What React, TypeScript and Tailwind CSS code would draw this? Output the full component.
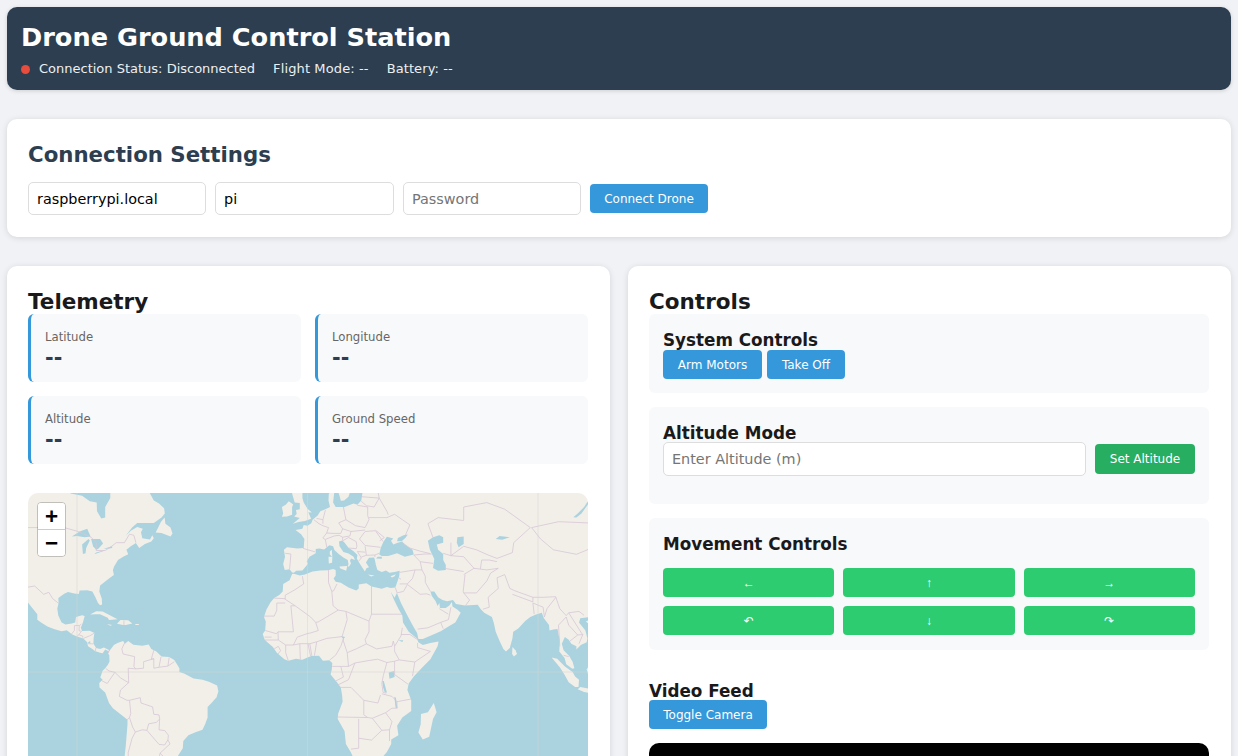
import React from 'react'

type Pt = [number, number]

// web mercator, same tile scale as the screenshot (tile = 230.5px, map box starts at 28,493)
const project = ([lon, lat]: Pt): Pt => {
  const x = 279.5 + (lon * 922) / 360
  const y = 179 - (922 / (2 * Math.PI)) * Math.log(Math.tan(Math.PI / 4 + (lat * Math.PI) / 360))
  return [x, y]
}
const toPath = (pts: Pt[], close = true) =>
  pts
    .map(project)
    .map(([x, y], i) => `${i ? 'L' : 'M'}${x.toFixed(1)} ${y.toFixed(1)}`)
    .join(' ') + (close ? 'Z' : '')

const land: Pt[][] = [
  // north + central america
  [[-130,66],[-130,40],[-112,30],[-109,26],[-105.5,22],[-105.5,20],[-104,19],[-101.5,17.5],[-99,16.6],[-96,15.7],[-94,16.1],[-92,14.6],[-90,13.7],[-87.5,13],[-86,11.5],[-85.7,10],[-84,9],[-83,8.2],[-81,7.5],[-80,7.3],[-79,8.8],[-77.5,8],[-77.5,8.6],[-79.5,9.5],[-81,8.9],[-82.5,9.3],[-83.6,11],[-83.5,13],[-83.2,15],[-85,15.9],[-88,15.8],[-88.5,17],[-87.7,19],[-87,21.4],[-88,21.6],[-90.4,21],[-90.7,19],[-92,18.6],[-94.5,18.2],[-96,19],[-97.3,21.5],[-97.7,24],[-97.2,26],[-97.3,27.7],[-95,29.2],[-93.5,29.8],[-91,29.3],[-89.3,29.1],[-89,30.3],[-86,30.4],[-84,30],[-82.8,28],[-81.8,26],[-81,25.2],[-80.2,25.5],[-80.3,27.5],[-81.3,30],[-81,32],[-79,33.3],[-77,34.6],[-75.6,35.4],[-76,37],[-75.5,38],[-74,40],[-72,41],[-70,41.7],[-70.7,43],[-69,44],[-67,44.9],[-65.7,43.5],[-63.5,44.6],[-61,45.3],[-60,46.2],[-60.6,47],[-61.5,45.9],[-64.5,46.2],[-65,47.8],[-64.3,48.7],[-66.5,49.2],[-69,48.2],[-71,46.9],[-68.5,49],[-66.5,50.2],[-60,50.2],[-57,51.5],[-55.7,52.5],[-56,53.7],[-58,54.8],[-60,55.5],[-61.5,57],[-62.5,58.5],[-64.5,60.3],[-64.5,66]],
  // newfoundland + caribbean
  [[-59.3,47.7],[-57,47.6],[-53.5,46.7],[-52.7,47.5],[-53.5,49],[-55.5,50],[-55.8,51.5],[-57.2,50.5],[-58.5,48.8]],
  [[-84.9,21.9],[-82.5,23.1],[-80,23],[-77,21.5],[-74.2,20.2],[-77.5,19.9],[-78,20.7],[-81,22],[-83,22]],
  [[-74.4,18.5],[-73,19.9],[-70,19.8],[-68.4,18.6],[-71,18.1],[-72,18.1]],
  [[-78.3,18.4],[-76.3,18.1],[-77,17.8]],
  [[-67.2,18.4],[-65.7,18.4],[-66,18],[-67.2,18]],
  // south america
  [[-77.5,8],[-75.6,10.5],[-74.2,11.2],[-72,12],[-71.3,11],[-70,12],[-68,10.6],[-64.5,10.2],[-62,10.7],[-61,9],[-59,8],[-57,6],[-54,5.8],[-52,4.7],[-50,1.5],[-50,0],[-48,-0.7],[-44.5,-2.5],[-41,-3],[-38.5,-3.8],[-35.3,-5.3],[-34.8,-7.5],[-35.5,-9.8],[-37.5,-12],[-39,-13.5],[-39,-17.5],[-40,-20],[-41,-22],[-44,-23],[-46.5,-24],[-48.5,-26],[-48.7,-28.5],[-50.5,-31],[-52.5,-33],[-54,-34.7],[-57,-34.6],[-58,-40],[-65,-41],[-75,-50],[-73.5,-37],[-71.5,-32],[-71,-28],[-70.3,-20],[-70.3,-18.3],[-72,-17],[-76,-14],[-77.5,-12],[-79,-8],[-81.2,-6],[-81.3,-4.3],[-80,-3],[-80.9,-2.2],[-80,0.5],[-79,1.5],[-78,2.7],[-77.3,4],[-77.4,6.5],[-77.9,7.2]],
  // eurasia + africa
  [[30,70],[30,60],[28,59.5],[24,59.3],[23.5,58.5],[24.5,58],[21.5,57.3],[21,55.5],[19.5,54.5],[18,54.8],[14.5,54],[11,54],[10,55],[10.5,57.5],[8.3,57],[8.2,55.5],[8.8,54],[7,53.5],[5,53],[4,52],[2,51],[1.5,50.1],[0,49.5],[-1.5,49.7],[-2,48.7],[-4.7,48.4],[-2.5,47.3],[-1.2,46],[-1.5,43.5],[-4,43.4],[-8,43.7],[-9.2,43],[-8.8,41],[-9.5,38.8],[-8.9,37],[-7,37.2],[-6,36.2],[-5.3,36.1],[-4.4,36.7],[-2,36.8],[-0.5,38.2],[0.2,39],[-0.3,39.6],[0.8,41],[3.2,42],[3.2,43.2],[4.7,43.4],[6.5,43.1],[8.5,44.3],[10,44],[10.5,42.9],[12.2,41.8],[14,40.8],[15.7,40],[16,38.8],[15.7,38],[16.2,38],[17,39],[16.6,39.8],[17,40.5],[18.5,40],[18,41],[16,41.9],[14,42.4],[12.5,44],[12.3,45.3],[13.6,45.6],[14.5,45],[16,43.6],[18,42.6],[19.5,41.5],[19.3,40.4],[20.5,38.8],[21.3,37.8],[22.4,36.5],[23,37.5],[24,37.8],[22.8,39.3],[24,40.7],[26,40.8],[26.3,40],[26.7,38.5],[27.3,37],[29,36.3],[30.6,36.8],[32,36.1],[34,36.3],[36,36.7],[35.8,35],[35,33],[34.3,31.3],[32.5,31.1],[31,31.5],[29,30.9],[25,31.6],[23,32.7],[20,32.3],[20,31],[19,30.3],[16,31.3],[13,32.9],[11,33.2],[10.2,34.3],[11,35.2],[11,37],[10,37.3],[8,36.9],[5,36.8],[2,36.5],[-1,35.5],[-3,35.2],[-5.3,35.8],[-6,35.7],[-7,33.7],[-9.5,32.5],[-9.7,30],[-11,28.8],[-13,27.7],[-14.5,26.2],[-16,23.7],[-17,21],[-16.3,19.3],[-16.5,16],[-17.5,14.7],[-16.7,12.5],[-15,11],[-13.5,9.7],[-12,7.5],[-9,5],[-7.5,4.4],[-4.5,5.2],[-2,4.8],[0,5.6],[1.5,6.2],[4.5,6.3],[6,4.4],[8.5,4.6],[9.7,3.5],[9.5,1],[9,-1],[11.5,-4],[13,-6],[13.5,-9],[13.7,-11.5],[12,-16],[11.8,-18],[14.5,-22.5],[15,-27],[17,-30],[18.3,-32.5],[18.5,-34.3],[20,-34.8],[25,-34],[28,-32.7],[31,-29.8],[32.7,-27],[32.7,-25.5],[35.5,-24],[35,-20.5],[37,-17.5],[40.5,-15],[40.5,-11],[39,-7],[39.5,-4.5],[41.5,-1.8],[44.5,1.5],[48,5],[50.8,10],[51.2,11.8],[48,11.2],[45,10.5],[43.3,11.5],[42.7,13],[39.5,15.5],[37.3,19],[37,21.5],[35.5,24],[33.8,27],[32.5,29.9],[34,27.8],[34.9,29.5],[36.5,26],[39,21.5],[41,18],[42.8,15],[43.3,12.8],[45,12.8],[48,14],[52,15.7],[55,17.5],[57.7,19],[59.8,22.5],[58.6,23.6],[56.6,24.8],[56.4,26.3],[55.5,25.2],[54,24.2],[51.7,24.2],[51.5,26],[50.8,24.9],[50.1,26.5],[48.5,28.5],[48,30],[49.5,30],[51,28],[52.7,27],[54.5,26.6],[56.8,27],[58,25.6],[61.5,25.1],[66.5,25.4],[67.5,24],[69,22.5],[72,21],[72.7,19],[73.5,15.5],[75,12],[76.5,9],[77.5,8],[79,9.3],[80,13],[80.3,15.5],[82.3,16.7],[85,19.5],[87,21],[89,21.8],[91.5,22.5],[92.3,20.5],[94.3,18],[94.5,16],[96,16.4],[97.6,16.5],[98.5,12],[98.3,8],[100.4,5.5],[101,3],[103.4,1.3],[104.2,1.5],[103.5,4],[102.2,6.2],[100,8.5],[99.3,11],[100.5,13.5],[102,12.5],[103,11],[105,10],[105,8.7],[106.7,10.5],[109,11.5],[109.3,13],[108.5,16],[106,19],[106.5,20.5],[110,21],[113,22],[120,30],[122,40],[130,43],[140,55],[150,70]],
  // scandinavia
  [[5,65],[5,59.5],[6,58.3],[8,58],[10.5,59.3],[11.3,58.5],[12.5,56.5],[13,55.4],[14.3,55.5],[16,56.3],[16.7,57.5],[18,59],[17.2,61],[17.5,65]],
  // islands
  [[-5.7,50],[-3.5,50.4],[-1,50.7],[1.4,51.2],[0.3,52.8],[1.7,52.7],[0,53.6],[-1.5,55],[-2,56],[-2,57.6],[-4,57.7],[-3,58.6],[-5,58.6],[-6,57],[-5,55],[-3,54.9],[-3,53.5],[-4.5,53.3],[-4.2,52.4],[-5.2,51.8],[-3,51.4]],
  [[-6,52.2],[-6,54],[-5.6,54.6],[-7.3,55.3],[-8.5,54.5],[-10,54],[-9.5,52.5],[-10,51.7],[-8,51.8]],
  [[9.7,41],[9.5,43],[8.7,42.5],[8.7,41.6]],
  [[8.3,39],[8.2,41],[9.7,41],[9.6,39.2]],
  [[12.5,38],[15.5,38.2],[15.1,36.7],[12.7,37.5]],
  [[23.6,35.5],[26.2,35.2],[24.8,34.9]],
  [[32.4,35],[34.5,35.6],[33.9,34.9],[33,34.6]],
  [[43.3,-23],[44.2,-20],[44.3,-16.2],[47,-15.5],[49.3,-12],[50.4,-15.5],[49,-18],[47.5,-24.5],[45,-25.5]],
  [[80,9.7],[81.2,8.5],[81.8,7],[80.6,6],[79.9,7]],
  [[95.3,5.6],[97.5,5.2],[100.5,2.2],[103.5,0],[104.5,-1.8],[106,-3],[105.8,-5.8],[104.5,-5.8],[102,-4],[100.3,-1],[98.6,1.8]],
  [[105.5,-6.7],[106.5,-5.9],[110,-6.5],[112,-7.5],[111,-8.4],[108,-7.8]],
  [[109,1],[109.6,2],[113,3],[113,-3.5],[110,-2.5]],
  [[108.7,19.3],[110.5,20.1],[110,18.4]],
]

const water: Pt[][] = [
  // hudson + james bay
  [[-94,63],[-94.5,59],[-92.5,57],[-88,56.5],[-85,55.3],[-82.3,55],[-82.2,53],[-80.5,51.3],[-79,51.5],[-79,54],[-77,56],[-77,58],[-78,60],[-78,63]],
  // great lakes
  [[-92,46.7],[-89,48],[-86,48.7],[-84.7,46.7],[-87,46.5],[-90,46.8]],
  [[-87.7,41.8],[-88,44.5],[-85.5,46],[-85,45.6],[-86.4,43.5],[-86.7,42]],
  [[-84.5,46],[-81,46],[-79.8,44.8],[-81.7,43.3],[-82.5,43],[-83.7,44]],
  [[-83.3,41.7],[-79,42.8],[-80,42.7],[-82.5,42.2]],
  [[-79.6,43.3],[-76.3,44],[-76.3,43.5],[-78,43.3]],
  // black + azov + caspian + aral etc
  [[28,41.6],[29,41.2],[31.5,41.2],[35,42],[38,41],[41.5,41.6],[41,43],[38,44.5],[37,45.3],[35.2,45],[33.5,44.5],[32.6,45.5],[33.5,46.1],[31,46.6],[29.6,45.2],[28.6,43.5]],
  [[35,45.4],[36.8,45.4],[38.2,46.3],[39.2,47.2],[37.5,47],[35.3,46.3]],
  [[47,45.5],[49,46.5],[51.5,47],[53,46.5],[53,45],[50.5,44.5],[51,43],[53,41.8],[53,40],[54,38.5],[54,37],[51,36.7],[49,37.6],[49.5,40.3],[47.8,43]],
  [[58.5,46.5],[61,46.7],[61,44.6],[59,43.7],[58.3,45]],
  [[73.5,46],[75,46.8],[79,46.5],[76,45.8]],
  [[26.8,40.5],[29,40.4],[29,41],[27.4,41]],
  [[103.8,51.6],[105.5,52.5],[108,54],[110,55.8],[109.5,54.6],[107,52.5],[105,51.5]],
  [[31.7,-0.2],[33.8,0.4],[34,-2],[32,-2.6]],
  [[29.2,-3.5],[29.8,-3.5],[31,-8],[30.2,-8],[29.5,-6]],
  [[33.9,-9.6],[34.5,-10],[35.1,-14],[34.4,-13.8]],
  [[-85.9,11.2],[-84.9,12],[-84.8,11.1]],
  [[35.5,12.3],[37.4,12.3],[37,11.6]],
  [[13,13.9],[14.7,13.5],[14,12.8]],
]

const borders: Pt[][] = [
  [[-110,49],[-95,49],[-89.5,48],[-84.5,46.5],[-82.5,45],[-82.5,42.8],[-79,42.8],[-76.5,44],[-74.7,45],[-71.5,45],[-69.5,47.3],[-67.8,47],[-67,45]],
  [[-110,31.3],[-106.5,31.8],[-103,29],[-101,29.7],[-99.5,27.5],[-97.2,25.9]],
  [[-92.2,14.6],[-91,16],[-91,17.8],[-89,17.9],[-88.3,18.4]],
  [[-89.1,17.9],[-89.2,15.9],[-88.2,15.7],[-89.3,14.4],[-90,13.7]],
  [[-89.3,14.4],[-87.7,13.8],[-87.8,13.3]],
  [[-87.5,13],[-85,14],[-83.2,15]],
  [[-85.7,11],[-83.7,10.9]],
  [[-82.9,8.1],[-82.6,9.5]],
  [[-77.4,8.6],[-77.9,7.2]],
  [[-71.7,19.7],[-71.7,18]],
  [[-71.3,11.5],[-72.5,9],[-72,7],[-67.5,6],[-67.8,2],[-67,1.2],[-70,1.5],[-69.8,-4.2],[-73,-2.3],[-75.2,-0.1],[-77.5,0.4],[-78.8,1.4]],
  [[-75.2,-0.1],[-78.2,-4.5],[-80.3,-3.4]],
  [[-69.9,-4.2],[-73,-7],[-73.5,-9.5],[-70.5,-11],[-69.5,-11],[-69,-16],[-69.5,-17.5],[-70.4,-18.3]],
  [[-69.5,-11],[-65.3,-10],[-65,-12],[-60.5,-13.5],[-60,-16.3],[-58,-16.5],[-57.7,-18],[-58,-22],[-55.7,-22.3],[-54.3,-24],[-54.5,-25.6],[-53.7,-27],[-57.6,-30.2],[-53.4,-33.7]],
  [[-69.5,-17.5],[-68.3,-21],[-67.2,-22.8],[-64.5,-22],[-62.7,-22.2],[-62,-19.8],[-59,-19.3],[-57.7,-18]],
  [[-62.7,-22.2],[-58,-27.2],[-55.8,-27.4],[-54.5,-25.6]],
  [[-67.2,-22.8],[-68.5,-25],[-70,-30],[-70,-33.5],[-70.5,-38]],
  [[-57.6,-30.2],[-58.3,-33.5]],
  [[-60,8.5],[-61,5],[-60,5.2],[-64,4],[-64,1.5],[-67,1.2]],
  [[-60,5.2],[-60,1.5],[-57,2],[-54.5,2.3],[-52,4]],
  [[-57.2,5.9],[-58,2]],
  [[-54,5.7],[-54.5,2.3]],
  // africa
  [[-2,35],[-1.5,32.5],[-5,30.5],[-8.7,28.7],[-8.7,27.3],[-4.8,25],[1.2,21],[3.2,19],[4.2,19.2],[12,23.5],[10,25],[9.5,30],[8.2,33],[8.2,37]],
  [[-13,27.7],[-8.7,27.5]],
  [[-8.7,26],[-12,26],[-12,23.5],[-13,21.3],[-17,21.3]],
  [[-4.8,25],[-6.5,25],[-5.5,15.5],[-11.5,15.5],[-12.2,14.8],[-16.5,16]],
  [[9.5,30],[10.2,30.2],[11.5,32.5]],
  [[25,32],[25,22],[37,22]],
  [[25,22],[24,19.5],[15,23],[12,23.5]],
  [[15,23],[15.5,20],[13.5,13.7],[7.5,13],[3.6,11.7],[2.7,6.3]],
  [[24,19.5],[24,15.5],[22.5,12.5],[23,10.9],[19,9],[15.5,7.5],[14,12],[14,13]],
  [[3.2,19],[4.2,16],[1,15],[0.2,14.9],[-4,13.5],[-5.5,10.5],[-8.5,10.5]],
  [[-3,11],[0.9,11],[3.6,11.7]],
  [[-3,11],[-2.8,5]],
  [[0.2,11],[1.2,6.1]],
  [[0.9,11],[1.7,6.2]],
  [[-5.5,10.5],[-3,11]],
  [[-8.5,7.5],[-7.5,4.4]],
  [[-11.5,15.5],[-11.4,12.4],[-8.5,10.5],[-8.5,7.5]],
  [[-13,9],[-11.4,10],[-10.5,8.3],[-11.5,7]],
  [[-16.7,12.4],[-11.4,12.4]],
  [[-16.7,13.5],[-14,13.5]],
  [[14,13],[13,10],[11,6.6],[8.6,4.6]],
  [[9.7,2.2],[16,2.2]],
  [[11,-3.5],[14,-2],[13,2.2]],
  [[15.5,7.5],[16,2.2],[18.5,3.5],[24,4.5],[27.4,5],[31,3.7],[34,4.2],[35.8,4.7],[34,8],[34,10],[36.5,14],[37,17]],
  [[23,10.9],[27,9],[33,10],[33.5,12],[34,10]],
  [[35.8,4.7],[41.9,3.9],[48,8],[43,9.5],[43,11.3]],
  [[36.5,14.5],[40,14.5],[43,12.5]],
  [[41.9,3.9],[41,-1.6]],
  [[34,4.2],[34,0],[34,-1],[39.2,-4.7]],
  [[31,3.7],[29.6,-1.4],[29,-4.5],[29.5,-8],[30.8,-8.2]],
  [[28.5,-9],[27.5,-12],[22,-11],[22,-16.5],[23.5,-17.5],[11.8,-17.3]],
  [[18.5,3.5],[16,-3],[12,-5]],
  [[12.5,-6],[17,-6],[22,-11]],
  [[20,-18],[20,-28.5],[17,-28.8]],
  [[20,-25],[25,-25.7],[29,-22.2],[32,-22],[32,-26]],
  [[25.3,-17.8],[29,-22.2]],
  [[32,-22],[33,-19],[30.5,-15.7],[25.3,-17.8],[23.5,-17.5]],
  [[40.5,-10.5],[34.9,-11.5],[35,-14],[33,-14],[30.5,-15.7]],
  [[29,-8.5],[33,-9.5],[34.9,-11.5]],
  // middle east + asia
  [[36,36.2],[42,37],[44.7,37],[44,39.5],[41.5,41.5]],
  [[42,37],[41,34.3],[39,32.5],[36,32.5]],
  [[39,32.3],[37.5,30],[35,29.5],[34.3,31.3]],
  [[39,32.3],[44,29],[46.5,29.2],[48,28.7]],
  [[44.7,37],[46,35],[46,33],[48,30]],
  [[43,16.5],[47,17],[52,19],[53,16.7]],
  [[52,19],[55,20],[55.5,22],[56,24.5]],
  [[51.5,24],[55,22]],
  [[35.7,34.5],[36.5,34]],
  [[61.5,35.5],[60.8,30],[61,29.5],[63.3,27],[61.6,25]],
  [[61,29.5],[66,29.5],[70,33.5],[71.5,36],[74.5,37.5]],
  [[61,35.5],[65,37.5],[70,37],[74.5,37.5]],
  [[54,37.4],[61,36.5]],
  [[68.5,23.8],[71,24.5],[70.5,28],[74.5,31],[74,34.5],[77,35.5],[79,31],[81,30.2],[88,28],[92,28],[97,28.2]],
  [[80,29],[88,26.4],[88,28]],
  [[88,26],[88.5,22]],
  [[88,26],[92,24.5],[92.5,21]],
  [[97,28],[93.5,24],[92.5,21]],
  [[97,28],[98.5,24],[101,21.5],[102,22.5],[106,23],[108,21.6]],
  [[101,21],[98,18],[98.5,10]],
  [[101,21],[102,18],[105.5,14.3],[102.5,12]],
  [[102,22.5],[107,15],[107.5,14.5],[106,11]],
  [[105.5,14.3],[107.5,14.5]],
  [[100,6.5],[102,6]],
  [[87.5,49],[91,46],[96,43],[105,41.7],[111,43.5]],
  [[87.5,49],[98,50.5],[106,50.3],[116,50]],
  [[49,46.4],[47,50],[51,51.5],[61,50.8],[61,54],[70,55],[77,53.5],[87,49],[80.5,45],[80,42.2]],
  [[56,45],[56,41.3],[61,44],[66,43],[70.5,41.5],[74,40.5],[80,42.2]],
  [[53,42],[56,41.3],[61,41],[65,37.5]],
  [[67.5,37.3],[68,40],[71,40],[74,39.5]],
  [[41.5,41.5],[46,41.8],[48.5,41.8]],
  [[44,39.5],[49,39]],
  // europe
  [[-1.7,43.4],[3,42.4]],
  [[-8.7,42],[-6.5,41.8],[-7,37.2]],
  [[2.5,51],[4.5,50],[6,49.5],[8.2,49],[7.5,47.6],[6,46.3],[7,45.8],[7.5,43.8]],
  [[7,53.3],[6,51],[6,50]],
  [[3.5,51.3],[6,51]],
  [[14,54],[15,51],[12.2,50.2],[13.7,48.7],[13,47.5],[10,47.5],[7.5,47.6]],
  [[7,45.9],[10.4,46.8],[12.3,47],[13.7,46.5],[13.7,45.6]],
  [[13.7,46.5],[16.5,46.8],[17,48],[22.5,48.4]],
  [[13.7,48.7],[17,48]],
  [[15,51],[18.8,49.5],[22.5,49],[24,51],[23.5,52],[23.5,54],[19.5,54.4]],
  [[21,55.3],[23,54.3],[26,54],[28,56],[21,56.3]],
  [[24.4,58],[27.5,57.5],[28,56]],
  [[24,51.5],[31,51.5],[34,52.3],[40,49.7],[38.2,47]],
  [[28,56],[31,53],[31.5,52.2]],
  [[22.5,48],[26.5,48.2],[29.5,45.3]],
  [[22.5,48],[20.3,46],[22.5,44.2],[28.5,43.7]],
  [[26.6,48.3],[30,46.4],[28.2,45.5]],
  [[22.5,44],[23,41.4],[26.3,41.5],[28,42]],
  [[26.3,41.5],[26.3,40.9]],
  [[13.7,45.5],[16,46.4],[19,45.3],[19.3,44],[19,43.3],[16,43.5]],
  [[19.5,42.5],[21,40.6],[20,39.7]],
  [[21,40.9],[23,41.4]],
  [[19.5,42.5],[22.5,42.3]],
  [[37,45],[40,43.5],[44,42.6],[48,41.9]],
]

const WorldMap = () => (
  <svg viewBox="0 0 560 400" className="block h-full w-full blur-[0.3px]">
    <rect width="560" height="400" fill="#aad3df" />
    {land.map((p, i) => (
      <path key={i} d={toPath(p)} fill="#f2efe9" />
    ))}
    {water.map((p, i) => (
      <path key={i} d={toPath(p)} fill="#aad3df" />
    ))}
    {borders.map((p, i) => (
      <path key={i} d={toPath(p, false)} fill="none" stroke="#d6c6d6" strokeWidth="0.8" />
    ))}
    <path d="M49 0V400M279.5 0V400M510 0V400M0 179H560" fill="none" stroke="#d4d4cf" strokeOpacity="0.6" strokeWidth="0.8" />
  </svg>
)

const btnBlue = 'h-[29px] rounded-[4px] bg-[#3498db] text-[12px] text-white'
const btnMove = "h-[29px] rounded-[4px] bg-[#2ecc71] font-['Liberation_Sans','DejaVu_Sans',sans-serif] text-[12px] text-white"
const input = 'rounded-[5px] border border-[#ddd] bg-white px-2 text-[14.4px] text-black outline-none placeholder:text-[#757575]'

const Stat = ({ label }: { label: string }) => (
  <div className="h-[68px] rounded-[6px] border-l-[3px] border-[#3498db] bg-[#f8f9fa] px-[14px] pt-[14px]">
    <div className="text-[11.7px] leading-[18px] text-[#666]">{label}</div>
    <div className="pt-[2px] text-[20.8px] leading-[20px] font-bold text-[#2c3e50]">--</div>
  </div>
)

const Panel = ({ className, children }: { className: string; children: React.ReactNode }) => (
  <div className={`rounded-[6px] bg-[#f8f9fa] px-[14px] ${className}`}>{children}</div>
)

export default function App() {
  return (
    <div className="min-h-screen bg-[#f0f2f5] p-[7px] font-['DejaVu_Sans',sans-serif] text-[#1a1a1a]">
      <header className="h-[83px] rounded-[10px] bg-[#2c3e50] px-[14px] pt-[14px] text-white shadow-[0_1px_4px_rgba(0,0,0,0.15)]">
        <h1 className="text-[25.6px] leading-[33px] font-bold">Drone Ground Control Station</h1>
        <div className="mt-[7px] flex items-center text-[13px] leading-[16px] text-[#ecf0f1]">
          <span className="mr-[9px] h-[9px] w-[9px] shrink-0 rounded-full bg-[#e74c3c]" />
          <span className="mr-[18px]">Connection Status: Disconnected</span>
          <span className="mr-[18px] tracking-[0.12px]">Flight Mode: --</span>
          <span className="tracking-[0.1px]">Battery: --</span>
        </div>
      </header>

      <section className="mt-[29px] h-[118px] rounded-[10px] bg-white px-[21px] pt-[22px] shadow-[0_1px_6px_rgba(0,0,0,0.12)]">
        <h2 className="text-[21.3px] leading-[28px] font-bold text-[#2c3e50]">Connection Settings</h2>
        <div className="mt-[13px] flex items-center gap-[9px]">
          <input className={`${input} h-[33px] w-[178px]`} defaultValue="raspberrypi.local" />
          <input className={`${input} h-[33px] w-[179px]`} defaultValue="pi" />
          <input className={`${input} h-[33px] w-[178px]`} placeholder="Password" />
          <button className={`${btnBlue} w-[118px]`}>Connect Drone</button>
        </div>
      </section>

      <div className="mt-[29px] grid grid-cols-2 gap-[18px]">
        <section className="rounded-[10px] bg-white pt-[22px] pr-[22px] pb-[21px] pl-[21px] shadow-[0_1px_6px_rgba(0,0,0,0.12)]">
          <h2 className="h-[26px] text-[21.5px] leading-[28px] font-bold">Telemetry</h2>
          <div className="grid grid-cols-2 gap-[14px]">
            <Stat label="Latitude" />
            <Stat label="Longitude" />
            <Stat label="Altitude" />
            <Stat label="Ground Speed" />
          </div>
          <div className="relative mt-[29px] h-[400px] overflow-hidden rounded-[10px]">
            <WorldMap />
            <div className="absolute top-[9px] left-[9px] flex w-[29px] flex-col rounded-[4px] border-[1.5px] border-black/20 bg-clip-padding font-['DejaVu_Sans_Mono',monospace] text-[21px] font-bold text-black">
              <button className="h-[27px] rounded-t-[3px] border-b border-[#ccc] bg-white leading-[26px]">+</button>
              <button className="h-[26px] rounded-b-[3px] bg-white leading-[26px]">−</button>
            </div>
          </div>
        </section>

        <section className="rounded-[10px] bg-white pt-[22px] pr-[22px] pb-[21px] pl-[21px] shadow-[0_1px_6px_rgba(0,0,0,0.12)]">
          <h2 className="h-[26px] text-[21.5px] leading-[28px] font-bold">Controls</h2>
          <Panel className="h-[79px] pt-[14px]">
            <h3 className="h-[22px] text-[16.8px] leading-[24px] font-bold">System Controls</h3>
            <div className="flex gap-[5px]">
              <button className={`${btnBlue} w-[99px]`}>Arm Motors</button>
              <button className={`${btnBlue} w-[78px]`}>Take Off</button>
            </div>
          </Panel>
          <Panel className="mt-[14px] h-[97px] pt-[14px]">
            <h3 className="h-[21px] text-[16.8px] leading-[24px] font-bold">Altitude Mode</h3>
            <div className="flex items-center gap-[9px]">
              <input className={`${input} h-[34px] flex-1`} placeholder="Enter Altitude (m)" />
              <button className="h-[30px] w-[100px] rounded-[4px] bg-[#27ae60] text-[12px] text-white">Set Altitude</button>
            </div>
          </Panel>
          <Panel className="mt-[14px] h-[132px] pt-[15px]">
            <h3 className="text-[16.8px] leading-[22px] font-bold">Movement Controls</h3>
            <div className="mt-[13px] grid grid-cols-3 gap-x-[9px] gap-y-[9px]">
              {['←', '↑', '→', '↶', '↓', '↷'].map((a) => (
                <button key={a} className={btnMove}>{a}</button>
              ))}
            </div>
          </Panel>
          <h3 className="mt-[29px] h-[21px] text-[16.8px] leading-[24px] font-bold">Video Feed</h3>
          <button className={`${btnBlue} w-[118px]`}>Toggle Camera</button>
          <div className="mt-[14px] h-[315px] rounded-[10px] bg-black" />
        </section>
      </div>
    </div>
  )
}
